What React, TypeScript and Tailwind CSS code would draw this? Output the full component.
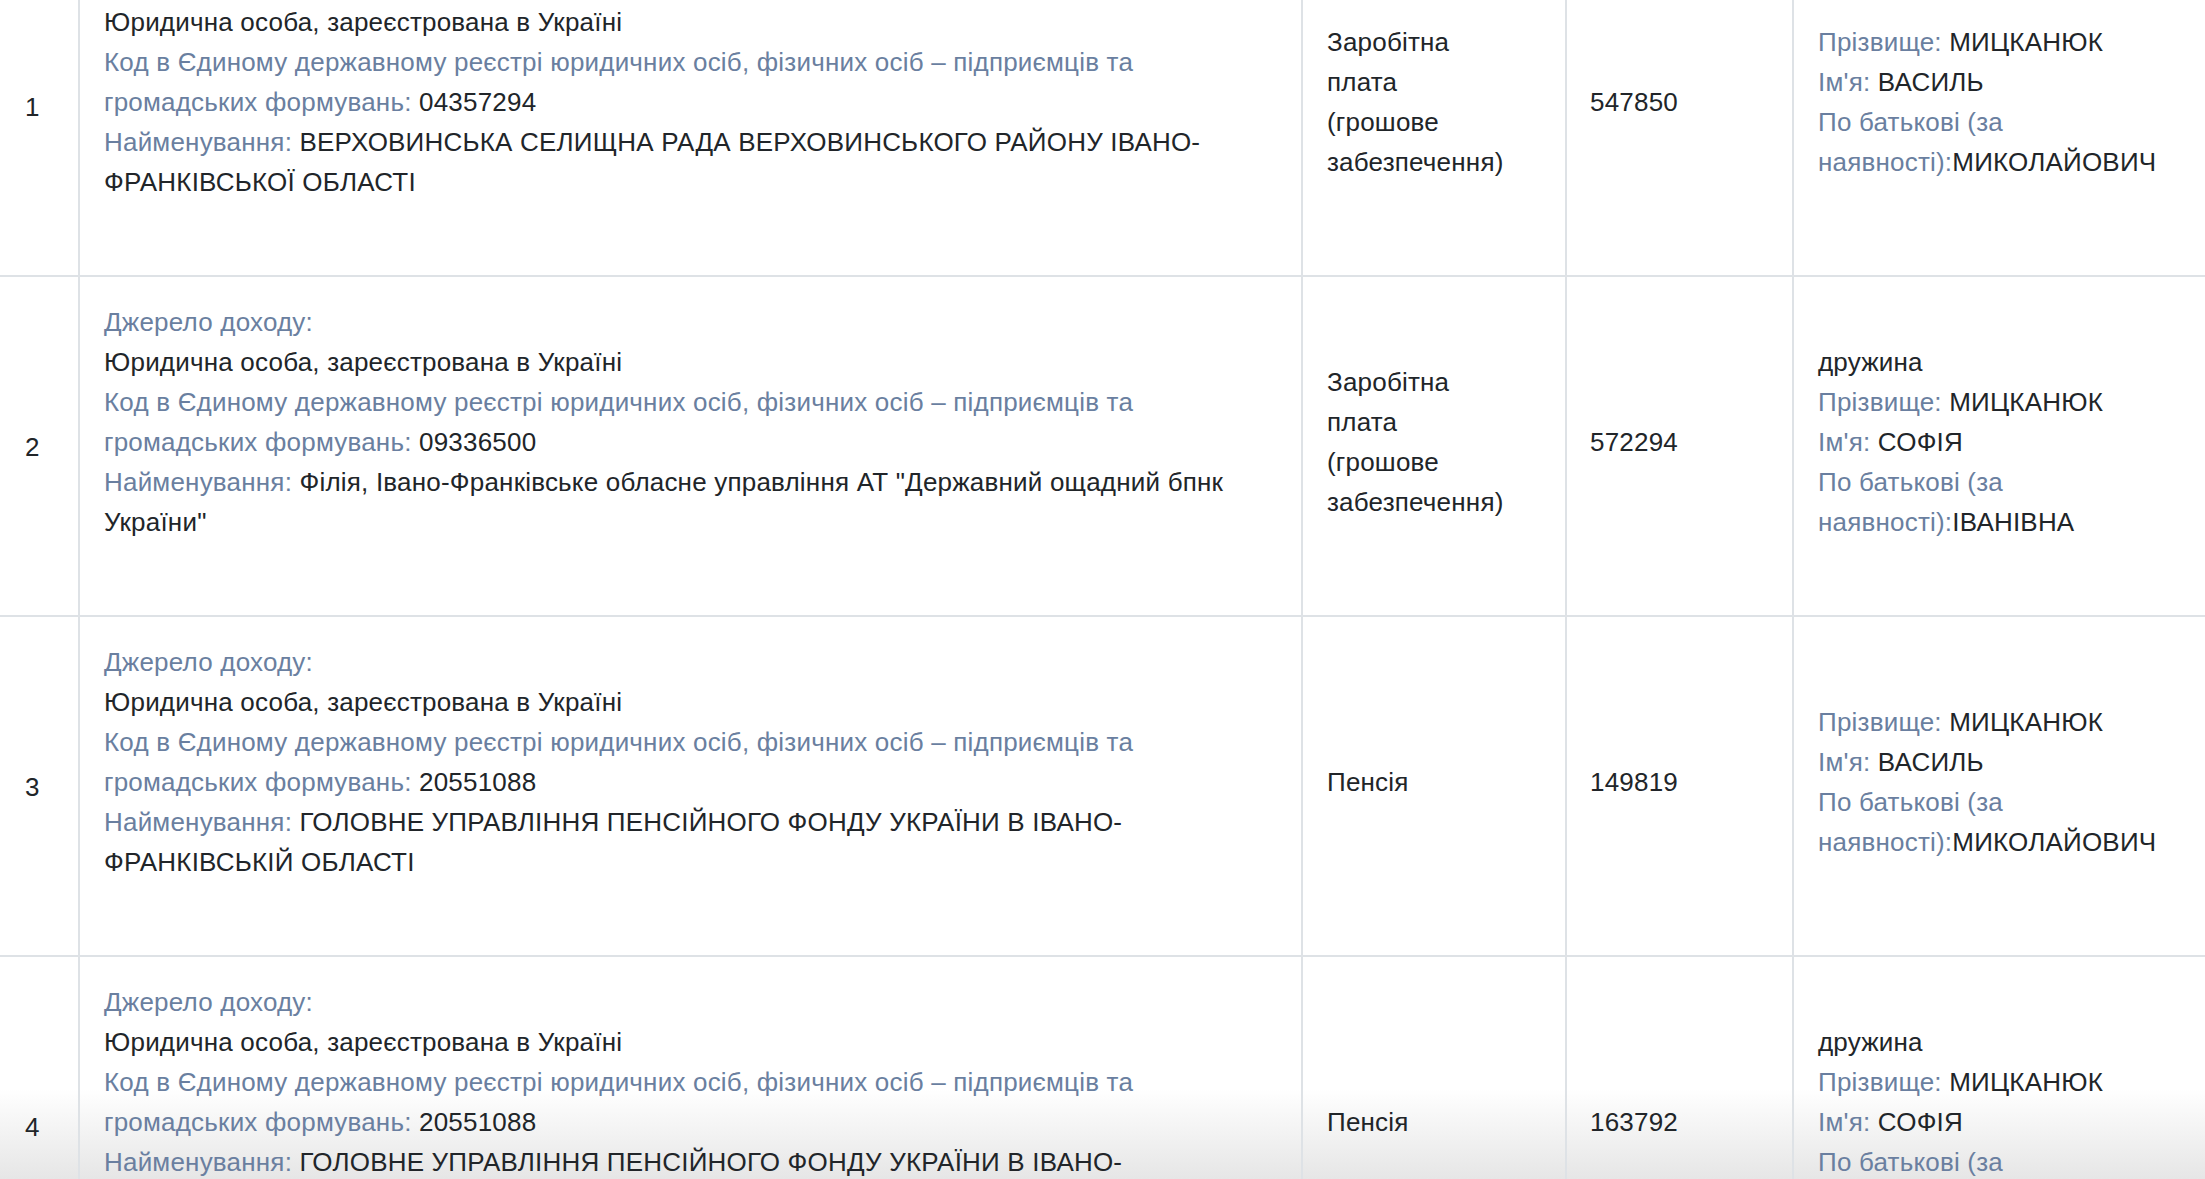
import React from "react";

type Row = {
  n: number;
  code: string;
  name: string;
  type: string;
  amount: string;
  relation?: string;
  first: string;
  patronymic: string;
};

const rows: Row[] = [
  {
    n: 1,
    code: "04357294",
    name: "ВЕРХОВИНСЬКА СЕЛИЩНА РАДА ВЕРХОВИНСЬКОГО РАЙОНУ ІВАНО-ФРАНКІВСЬКОЇ ОБЛАСТІ",
    type: "Заробітна плата (грошове забезпечення)",
    amount: "547850",
    first: "ВАСИЛЬ",
    patronymic: "МИКОЛАЙОВИЧ",
  },
  {
    n: 2,
    code: "09336500",
    name: 'Філія, Івано-Франківське обласне управління АТ "Державний ощадний бпнк України"',
    type: "Заробітна плата (грошове забезпечення)",
    amount: "572294",
    relation: "дружина",
    first: "СОФІЯ",
    patronymic: "ІВАНІВНА",
  },
  {
    n: 3,
    code: "20551088",
    name: "ГОЛОВНЕ УПРАВЛІННЯ ПЕНСІЙНОГО ФОНДУ УКРАЇНИ В ІВАНО-ФРАНКІВСЬКІЙ ОБЛАСТІ",
    type: "Пенсія",
    amount: "149819",
    first: "ВАСИЛЬ",
    patronymic: "МИКОЛАЙОВИЧ",
  },
  {
    n: 4,
    code: "20551088",
    name: "ГОЛОВНЕ УПРАВЛІННЯ ПЕНСІЙНОГО ФОНДУ УКРАЇНИ В ІВАНО-ФРАНКІВСЬКІЙ ОБЛАСТІ",
    type: "Пенсія",
    amount: "163792",
    relation: "дружина",
    first: "СОФІЯ",
    patronymic: "ІВАНІВНА",
  },
];

const L = ({ children }: { children: React.ReactNode }) => (
  <span className="text-[#6a7fa0]">{children}</span>
);

export default function App() {
  return (
    <div
      className="relative h-[1179px] w-[2205px] overflow-hidden bg-white text-[26px] leading-[40px] tracking-[0.2px] text-[#212529]"
      style={{ fontFamily: '"Liberation Sans", Arial, Helvetica, sans-serif' }}
    >
      <div className="pointer-events-none absolute inset-x-0 bottom-0 z-0 h-[90px] bg-linear-to-b from-[#ffffff] to-[#e6e6e6]" />
      <div className="relative z-10 -mt-[63px] flex flex-col">
        {rows.map((r) => (
          <div
            key={r.n}
            className="grid h-[340px] grid-cols-[80px_1223px_264px_227px_1fr] border-b-2 border-[#dee2e6]"
          >
            <div className="flex flex-col justify-center border-r-2 border-[#dee2e6] pl-[25px] pr-[12px] pt-[35px] pb-[33px]">
              {r.n}
            </div>
            <div className="flex flex-col justify-center border-r-2 border-[#dee2e6] px-[24px] pt-[25px] pb-[33px]">
              <div className="w-[1145px] pb-[40px]">
                <div>
                  <L>Джерело доходу:</L>
                </div>
                <div>Юридична особа, зареєстрована в Україні</div>
                <div>
                  <L>
                    Код в Єдиному державному реєстрі юридичних осіб, фізичних осіб – підприємців та
                    громадських формувань:
                  </L>{" "}
                  {r.code}
                </div>
                <div>
                  <L>Найменування:</L> {r.name}
                </div>
              </div>
            </div>
            <div className="flex flex-col justify-center border-r-2 border-[#dee2e6] px-[24px] pt-[25px] pb-[33px]">
              <div className="w-[184px]">{r.type}</div>
            </div>
            <div className="flex flex-col justify-center border-r-2 border-[#dee2e6] px-[23px] pt-[25px] pb-[33px]">
              {r.amount}
            </div>
            <div className="flex flex-col justify-center px-[24px] pt-[25px] pb-[33px]">
              <div className="w-[363px]">
                {r.relation && <div>{r.relation}</div>}
                <div>
                  <L>Прізвище:</L> МИЦКАНЮК
                </div>
                <div>
                  <L>Ім'я:</L> {r.first}
                </div>
                <div>
                  <L>По батькові (за наявності):</L>
                  {r.patronymic}
                </div>
              </div>
            </div>
          </div>
        ))}
      </div>
    </div>
  );
}
